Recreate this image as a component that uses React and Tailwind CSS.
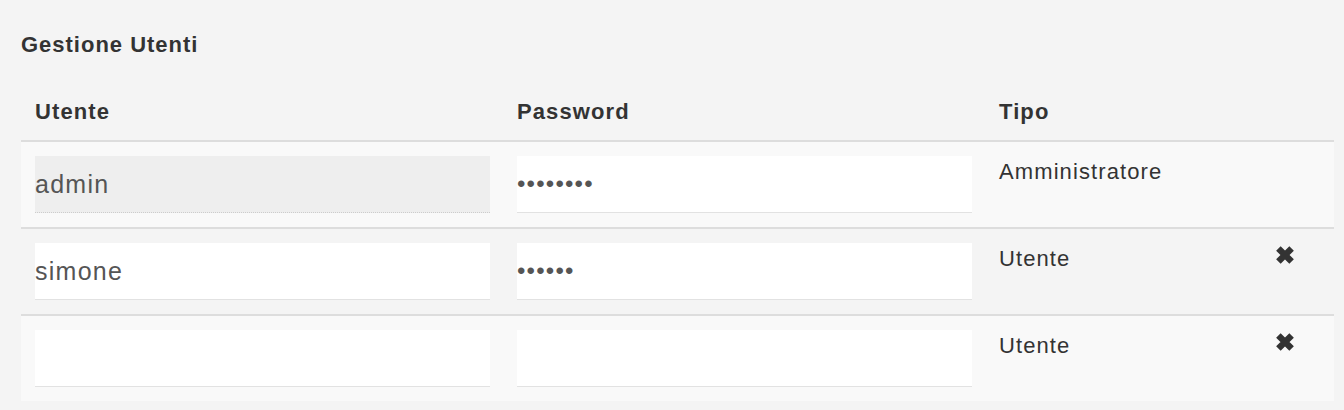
import { useState } from 'react';

const XIcon = () => (
  <svg className="w-5 h-5 text-[#333]" viewBox="0 0 20 20" fill="none">
    <path d="M3.4 3.4L16.6 16.6M16.6 3.4L3.4 16.6" stroke="currentColor" strokeWidth={6.4} />
  </svg>
);

const initialUsers = [
  { id: 1, name: 'admin', password: 'password', tipo: 'Amministratore', locked: true },
  { id: 2, name: 'simone', password: 'simone', tipo: 'Utente', locked: false },
  { id: 3, name: '', password: '', tipo: 'Utente', locked: false },
];

const inputBase =
  'w-[455px] h-[57px] p-0 text-[#555] outline-none border-0 border-b';

const App = () => {
  const [users, setUsers] = useState(initialUsers);

  const update = (id, field, value) =>
    setUsers((us) => us.map((u) => (u.id === id ? { ...u, [field]: value } : u)));

  return (
    <div className="min-h-screen bg-[#f4f4f4] pl-[21px] pr-[10px] pt-[29px] font-['Liberation_Sans',Arial,sans-serif] text-[#333]">
      {/* Title */}
      <h2 className="text-[22px] leading-[31px] font-bold tracking-[0.045em]">Gestione Utenti</h2>

      {/* Table */}
      <div className="mt-[22px] w-[1313px]">
        {/* Header */}
        <div className="grid grid-cols-[482px_482px_276px_1fr] border-b-2 border-[#dddddd] text-[22px] leading-[31px] font-bold tracking-[0.05em]">
          <div className="px-[14px] pt-[14px] pb-[13px]">Utente</div>
          <div className="px-[14px] pt-[14px] pb-[13px]">Password</div>
          <div className="px-[14px] pt-[14px] pb-[13px]">Tipo</div>
          <div />
        </div>

        {/* Rows */}
        {users.map((u, i) => (
          <div
            key={u.id}
            className={`grid grid-cols-[482px_482px_276px_1fr] ${
              i > 0 ? 'border-t-2 border-[#dddddd]' : ''
            } ${i % 2 === 0 ? 'bg-[#f9f9f9]' : ''}`}
          >
            <div className="px-[14px] py-[14px]">
              <input
                type="text"
                value={u.name}
                disabled={u.locked}
                onChange={(e) => update(u.id, 'name', e.target.value)}
                className={`${inputBase} text-[25px] tracking-[0.05em] ${
                  u.locked
                    ? 'bg-[#eeeeee] border-dotted border-[#cccccc]'
                    : 'bg-white border-solid border-[#e2e2e2]'
                }`}
              />
            </div>
            <div className="px-[14px] py-[14px]">
              <input
                type="password"
                value={u.password}
                onChange={(e) => update(u.id, 'password', e.target.value)}
                className={`${inputBase} text-[24px] tracking-[0.05em] bg-white border-solid border-[#e2e2e2]`}
              />
            </div>
            <div className="px-[14px] py-[14px] text-[22px] leading-[31px] tracking-[0.05em]">
              {u.tipo}
            </div>
            <div className="px-[14px] py-[14px]">
              {!u.locked && (
                <button className="mt-[2px] block" onClick={() => setUsers((us) => us.filter((x) => x.id !== u.id))}>
                  <XIcon />
                </button>
              )}
            </div>
          </div>
        ))}
      </div>
    </div>
  );
};

export default App;
